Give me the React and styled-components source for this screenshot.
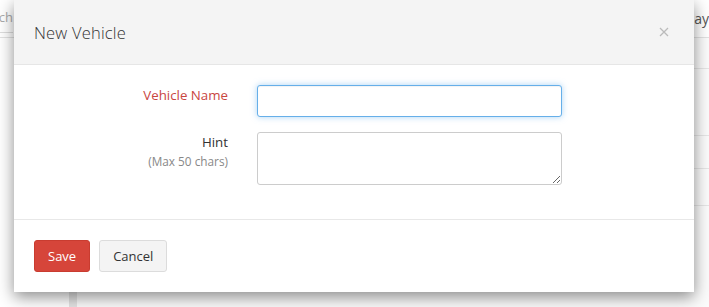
import React from "react";
import styled, { createGlobalStyle } from "styled-components";

const GlobalStyle = createGlobalStyle`
  html, body {
    margin: 0;
    padding: 0;
    background: #fff;
    font-family: "Open Sans", "Liberation Sans", sans-serif;
    overflow: hidden;
  }
`;

// Pagina de fondo, casi toda tapada por el modal
const Page = styled.div`
  position: relative;
  width: 709px;
  height: 307px;
  background: #fafafa;
  overflow: hidden;
`;

const TopBar = styled.div`
  height: 37px;
  display: flex;
  justify-content: space-between;
  align-items: flex-start;
  border-bottom: 1px solid #e2e2e2;
  background: #fff;
`;

const Search = styled.div`
  margin-left: -90px;
  margin-top: 3px;
  width: 103px;
  height: 29px;
  border-bottom: 1px solid #ddd;
  font-size: 13px;
  color: #aaa;
  text-align: right;
  line-height: 29px;
`;

const TopRight = styled.div`
  margin-right: 0;
  margin-top: 9px;
  font-size: 14px;
  color: #555;
`;

const Content = styled.div`
  display: flex;
  height: 269px;
`;

const Side = styled.div`
  width: 69px;
  background: #fff;
`;

const Rail = styled.div`
  width: 8px;
  background: #e4e4e4;
`;

const Main = styled.div`
  flex: 1;
  background: #fbfbfb;
  display: flex;
  flex-direction: column;
`;

const Row = styled.div`
  height: ${p => p.h}px;
  border-bottom: 1px solid #e6e6e6;
`;

const Modal = styled.div`
  position: absolute;
  left: 14px;
  top: 0;
  width: 680px;
  background: #fff;
  box-shadow: 0 5px 15px rgba(0, 0, 0, 0.45);
`;

const Header = styled.div`
  height: 64px;
  background: #f4f4f4;
  border-bottom: 1px solid #e6e6e6;
  display: flex;
  align-items: center;
  justify-content: space-between;
  padding: 0 20px 0 20px;
`;

const Title = styled.h4`
  margin: 0;
  font-size: 16.5px;
  font-weight: 300;
  color: #333;
  letter-spacing: 0.2px;
`;

const Close = styled.button`
  border: none;
  background: transparent;
  padding: 0;
  width: 14px;
  height: 14px;
  cursor: pointer;
  display: flex;
  align-items: center;
  justify-content: center;
  margin-right: 3px;
`;

const Body = styled.div`
  padding: 20px 0 34px;
  display: flex;
  flex-direction: column;
  gap: 15px;
  border-bottom: 1px solid #e8e8e8;
`;

const Field = styled.div`
  display: grid;
  grid-template-columns: 214px 305px;
  column-gap: 29px;
  align-items: start;
`;

const Label = styled.label`
  text-align: right;
  font-size: 13.3px;
  color: ${p => (p.error ? "#c9463f" : "#333")};
  line-height: 18px;
  padding-top: ${p => p.pt || 0}px;
`;

const Sub = styled.span`
  display: block;
  font-size: 11.8px;
  color: #888;
  margin-top: 1px;
`;

const Input = styled.input`
  box-sizing: border-box;
  width: 305px;
  height: 32px;
  border: 1px solid #66afe9;
  border-radius: 3px;
  outline: none;
  box-shadow: inset 0 1px 1px rgba(0, 0, 0, 0.05), 0 0 6px rgba(102, 175, 233, 0.55);
  padding: 0 8px;
  font-size: 13px;
`;

const TextArea = styled.textarea`
  box-sizing: border-box;
  width: 305px;
  height: 53px;
  border: 1px solid #ccc;
  border-radius: 3px;
  outline: none;
  padding: 6px 8px;
  font-size: 13px;
  font-family: inherit;
  display: block;
`;

const Footer = styled.div`
  padding: 20px 20px 20px;
  display: flex;
  gap: 9px;
`;

const Button = styled.button`
  height: 32px;
  padding: 0 13px;
  border-radius: 3px;
  font-family: inherit;
  font-size: 13px;
  cursor: pointer;
  border: 1px solid ${p => (p.primary ? "#c93c30" : "#dcdcdc")};
  background: ${p => (p.primary ? "#d6453a" : "#f4f4f4")};
  color: ${p => (p.primary ? "#fff" : "#333")};
`;

export default function App() {
  return (
    <Page>
      <GlobalStyle />
      <TopBar>
        <Search>Search</Search>
        <TopRight>Today</TopRight>
      </TopBar>
      <Content>
        <Side />
        <Rail />
        <Main>
          <Row h={30} />
          <Row h={66} />
          <Row h={32} />
          <Row h={36} />
        </Main>
      </Content>

      <Modal>
        <Header>
          <Title>New Vehicle</Title>
          <Close aria-label="Close">
            <svg width="10" height="10" viewBox="0 0 10 10">
              <path d="M1 1 L9 9 M9 1 L1 9" stroke="#bbb" strokeWidth="1.3" />
            </svg>
          </Close>
        </Header>
        <Body>
          <Field>
            <Label error pt={1}>Vehicle Name</Label>
            <Input />
          </Field>
          <Field>
            <Label pt={1}>
              Hint
              <Sub>(Max 50 chars)</Sub>
            </Label>
            <TextArea />
          </Field>
        </Body>
        <Footer>
          <Button primary>Save</Button>
          <Button>Cancel</Button>
        </Footer>
      </Modal>
    </Page>
  );
}
